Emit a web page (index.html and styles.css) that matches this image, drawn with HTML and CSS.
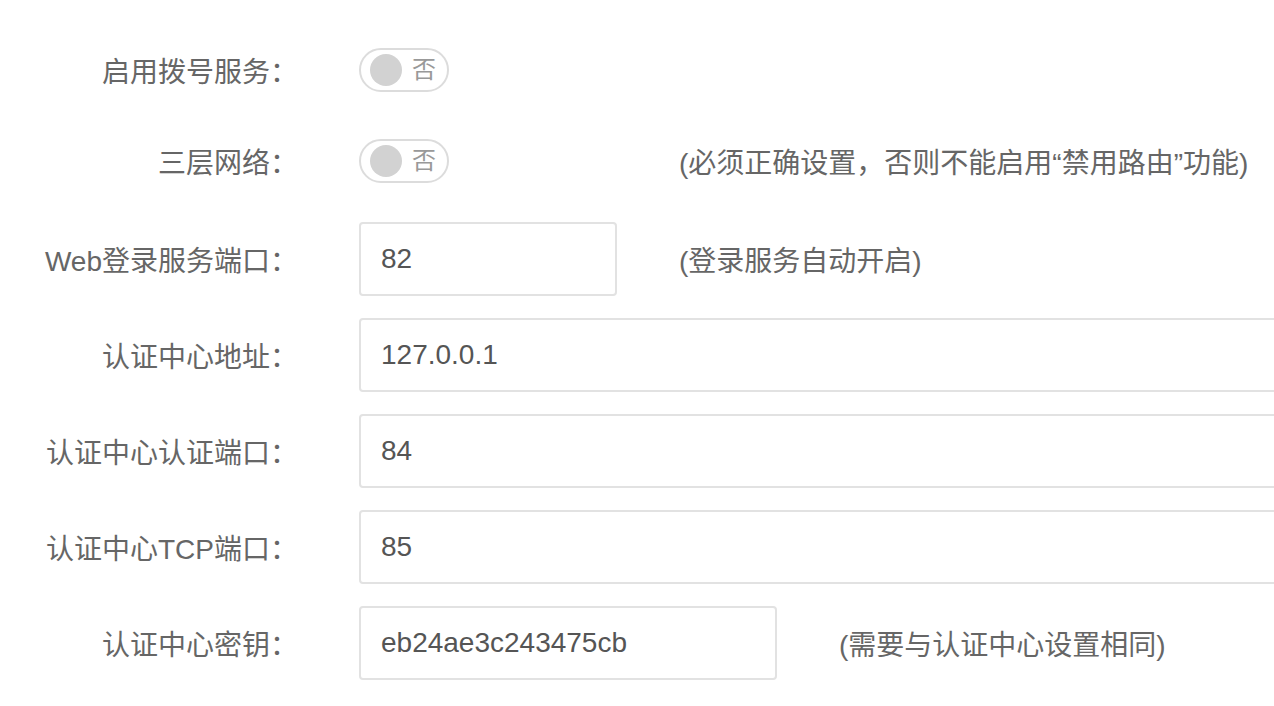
FILE: index.html
```
<!DOCTYPE html>
<html>
	<head>
		<meta charset="utf-8" />
		<title>拨号服务设置</title>
		<link rel="stylesheet" href="styles.css">
	</head>
	<body>
		<form class="settings">
			<div class="form-group switch-row">
				<label>启用拨号服务：</label>
				<div class="control short">
					<span class="switch"><span class="knob"></span><span class="switch-text">否</span></span>
				</div>
			</div>
			<div class="form-group switch-row">
				<label>三层网络：</label>
				<div class="control short">
					<span class="switch"><span class="knob"></span><span class="switch-text">否</span></span>
				</div>
				<span class="hint">(必须正确设置，否则不能启用“禁用路由”功能)</span>
			</div>
			<div class="form-group">
				<label for="webPort">Web登录服务端口：</label>
				<div class="control short">
					<input type="text" id="webPort" value="82" />
				</div>
				<span class="hint">(登录服务自动开启)</span>
			</div>
			<div class="form-group">
				<label for="authAddr">认证中心地址：</label>
				<div class="control wide">
					<input type="text" id="authAddr" value="127.0.0.1" />
				</div>
			</div>
			<div class="form-group">
				<label for="authPort">认证中心认证端口：</label>
				<div class="control wide">
					<input type="text" id="authPort" value="84" />
				</div>
			</div>
			<div class="form-group">
				<label for="tcpPort">认证中心TCP端口：</label>
				<div class="control wide">
					<input type="text" id="tcpPort" value="85" />
				</div>
			</div>
			<div class="form-group">
				<label for="authKey">认证中心密钥：</label>
				<div class="control medium">
					<input type="text" id="authKey" value="eb24ae3c243475cb" />
				</div>
				<span class="hint">(需要与认证中心设置相同)</span>
			</div>
		</form>
	</body>
</html>
```

FILE: styles.css
```
html,
body {
	overflow: hidden;
}

body {
	margin: 0;
	font-family: "Liberation Sans", "Noto Sans CJK SC", sans-serif;
	font-size: 28px;
	color: #666;
	background-color: #fff;
}

.settings {
	padding-top: 40px;
	width: 1600px;
}

.form-group {
	display: flex;
	align-items: center;
	height: 74px;
	margin-bottom: 22px;
}

.form-group.switch-row {
	height: 60px;
	margin-bottom: 31px;
}

.form-group label {
	width: 298px;
	margin-right: 61px;
	text-align: right;
	white-space: nowrap;
	color: #666;
}

.control {
	flex: none;
}

.control.short {
	width: 258px;
}

.control.medium {
	width: 418px;
}

.control.wide {
	width: 1000px;
}

.form-group input[type='text'] {
	box-sizing: border-box;
	width: 100%;
	height: 74px;
	padding: 0 20px;
	font-family: "Liberation Sans", "Noto Sans CJK SC", sans-serif;
	font-size: 28px;
	color: #555;
	border: 2px solid #e2e2e2;
	border-radius: 4px;
	outline: none;
}

.switch {
	position: relative;
	display: inline-block;
	box-sizing: border-box;
	width: 90px;
	height: 44px;
	border: 2px solid #dcdcdc;
	border-radius: 22px;
	background-color: #fff;
	vertical-align: middle;
}

.switch .knob {
	position: absolute;
	left: 9px;
	top: 4px;
	width: 32px;
	height: 32px;
	border-radius: 50%;
	background-color: #d2d2d2;
}

.switch .switch-text {
	position: absolute;
	left: 51px;
	top: 5px;
	font-size: 24px;
	line-height: 30px;
	color: #999;
}

.hint {
	margin-left: 62px;
	white-space: nowrap;
	color: #666;
}
```
